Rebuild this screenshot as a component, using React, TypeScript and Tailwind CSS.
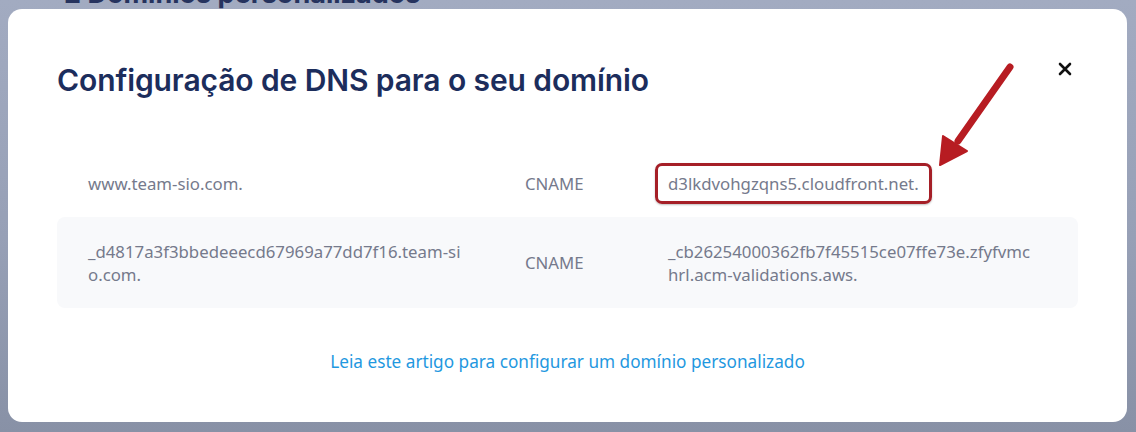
import React from "react";

export default function App() {
  return (
    <div className="relative h-[432px] w-[1136px] overflow-hidden bg-[linear-gradient(180deg,#a2abc1_0%,#97a0b6_55%,#8891a6_100%)] font-['Inter',sans-serif]">
      <div className="-mt-[22px] h-[31px] pl-[64px] text-[27px] font-bold leading-[31px] text-[#26335e]">
        2 Domínios personalizados
      </div>
      <div className="relative mx-[8px] h-[413px] w-[1119px] rounded-[14px] bg-white px-[49px] pt-[51px]">
        <div className="flex items-start justify-between">
          <h2 className="text-[30px] font-semibold leading-[40px] tracking-[-0.1px] text-[#1c2d5c]">
            Configuração de DNS para o seu domínio
          </h2>
          <button className="mr-[5px] mt-[1px] flex h-[16px] w-[16px] items-center justify-center">
            <svg width="14" height="14" viewBox="0 0 14 14">
              <path d="M2 2L12 12M12 2L2 12" stroke="#111" strokeWidth="2.6" strokeLinecap="round" />
            </svg>
          </button>
        </div>

        <div className="mt-[50px] font-['Noto_Sans',sans-serif] text-[16.8px] leading-[23px] text-[#757a8c]">
          <div className="grid h-[67px] grid-cols-[437px_143px_1fr] items-center pl-[31px]">
            <div>www.team-sio.com.</div>
            <div>CNAME</div>
            <div>
              <span className="-ml-[13px] inline-block rounded-[7px] border-[3px] border-[#a51f27] px-[10px] py-[6px] shadow-[0_1px_2px_rgba(0,0,0,0.25)]">
                d3lkdvohgzqns5.cloudfront.net.
              </span>
            </div>
          </div>
          <div className="grid h-[91px] grid-cols-[437px_143px_1fr] items-center rounded-[8px] bg-[#f8f9fb] pl-[31px]">
            <div className="whitespace-nowrap">
              _d4817a3f3bbedeeecd67969a77dd7f16.team-si
              <br />
              o.com.
            </div>
            <div>CNAME</div>
            <div className="whitespace-nowrap">
              _cb26254000362fb7f45515ce07ffe73e.zfyfvmc
              <br />
              hrl.acm-validations.aws.
            </div>
          </div>
        </div>

        <div className="mt-[42px] text-center font-['Noto_Sans',sans-serif] text-[17.2px] leading-[23px] text-[#1f98e0]">
          <a href="#">Leia este artigo para configurar um domínio personalizado</a>
        </div>

        <svg className="pointer-events-none absolute left-[912px] top-[42px]" width="110" height="130" viewBox="0 0 110 130">
          <line x1="90" y1="16" x2="38" y2="90" stroke="#b71c22" strokeWidth="7" strokeLinecap="round" />
          <polygon points="20,114 23,85 47,100" fill="#b71c22" stroke="#b71c22" strokeWidth="2" strokeLinejoin="round" />
        </svg>
      </div>
    </div>
  );
}
